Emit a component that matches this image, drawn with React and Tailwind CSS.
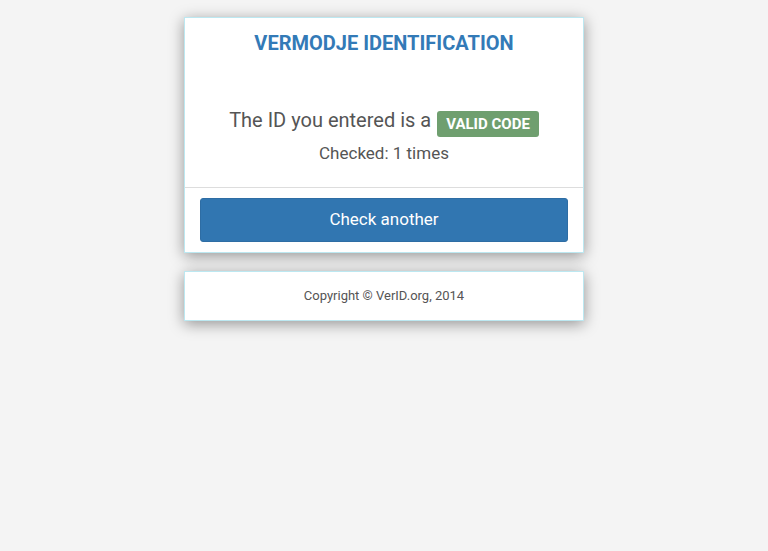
export default function App() {
  return (
    <div className="min-h-[551px] w-full bg-[#f4f4f4] pt-[17px]" style={{ fontFamily: "Roboto, 'Liberation Sans', sans-serif" }}>
      <div className="mx-auto w-[400px] border border-[#bce8f1] bg-white shadow-[0_3px_14px_rgba(0,0,0,0.4)]">
        <div className="px-[15px] pt-[14px] pb-[23px] text-center">
          <h3 className="text-[20px] leading-[22px] font-bold text-[#337ab7]">VERMODJE IDENTIFICATION</h3>
          <div className="mt-[57px] flex h-[26px] items-start justify-center text-[#555]">
            <span className="text-[20px] leading-[18px]">The ID you entered is a</span>
            <span className="ml-[6px] inline-flex h-[26px] items-center rounded-[3px] bg-[#6f9f6f] px-[9px] text-[15px] font-bold text-white">VALID CODE</span>
          </div>
          <div className="mt-[5px] text-[17px] leading-[22px] text-[#555]">Checked: 1 times</div>
        </div>
        <div className="border-t border-[#ddd] px-[15px] pt-[10px] pb-[10px]">
          <button className="flex h-[44px] w-full items-center justify-center rounded-[3px] border border-[#2e6da4] bg-[#3176b1] text-[17px] text-white">Check another</button>
        </div>
      </div>
      <div className="mx-auto mt-[18px] flex h-[50px] w-[400px] items-center justify-center border border-[#bce8f1] bg-white text-[13px] text-[#555] shadow-[0_3px_14px_rgba(0,0,0,0.4)]">
        Copyright © VerID.org, 2014
      </div>
    </div>
  );
}
